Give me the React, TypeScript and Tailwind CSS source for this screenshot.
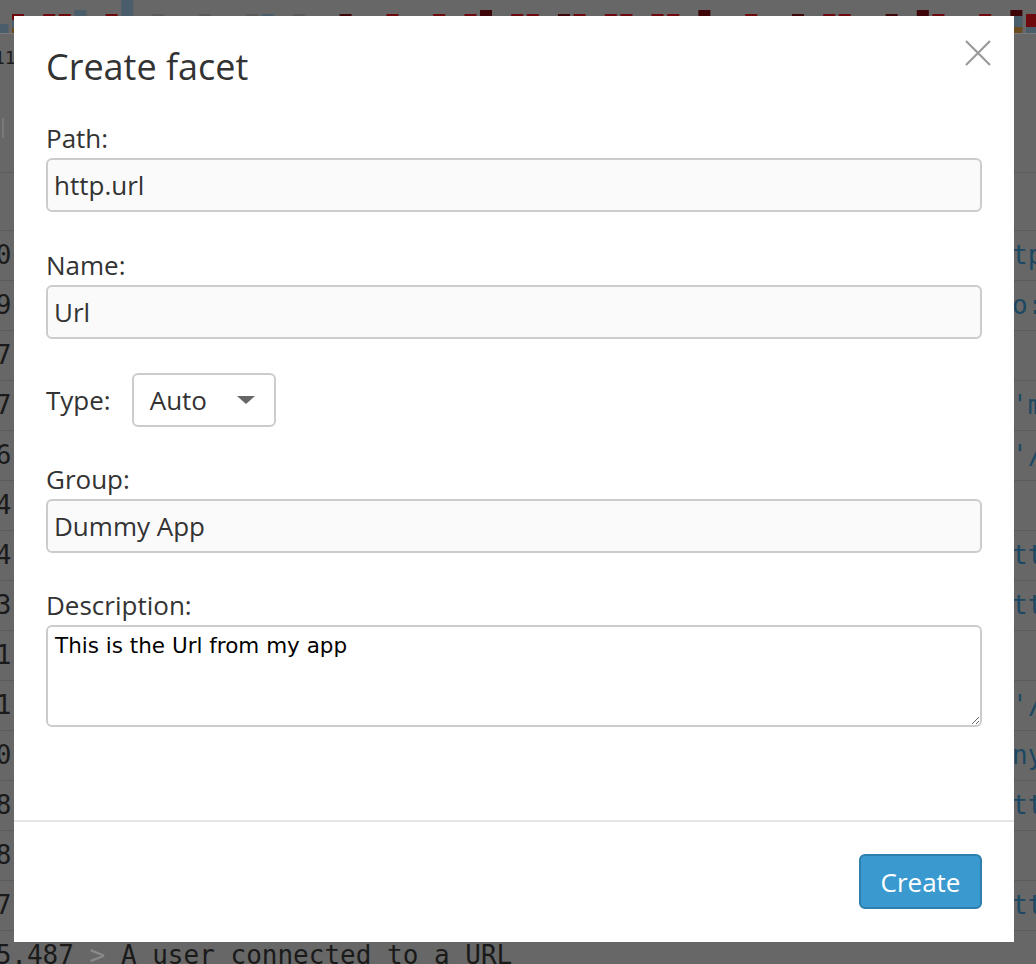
import React from 'react'

type Seg = [number, number, string]

const RED = '#6e0a0e'
const DARK = '#3e0609'
const BLUE = '#4a5d6b'
const GRAY = '#5a5a5a'
const ORANGE = '#6b4a1e'

// histogram bars behind the dim overlay: slot index -> stacked segments (top, bottom, colour)
const bars: Record<number, Seg[]> = {
  [-1]: [[24, 33, BLUE]],
  0: [[14, 20, RED], [20, 28, BLUE], [28, 33, ORANGE]],
  2: [[14, 33, RED]],
  3: [[14, 33, RED]],
  4: [[10, 33, BLUE]],
  6: [[14, 33, RED]],
  7: [[0, 33, BLUE]],
  9: [[14, 33, GRAY]],
  12: [[14, 33, GRAY]],
  15: [[14, 33, GRAY]],
  16: [[14, 33, BLUE]],
  18: [[14, 33, GRAY]],
  21: [[14, 33, DARK]],
  24: [[14, 33, RED]],
  27: [[14, 33, RED]],
  29: [[14, 33, RED]],
  30: [[10, 33, DARK]],
  32: [[14, 33, RED]],
  33: [[14, 33, RED]],
  35: [[14, 33, DARK]],
  36: [[14, 33, RED]],
  38: [[14, 33, RED]],
  39: [[14, 33, RED]],
  41: [[14, 33, RED]],
  42: [[14, 33, RED]],
  44: [[10, 33, DARK]],
  47: [[14, 33, RED]],
  50: [[14, 33, DARK]],
  52: [[14, 33, RED]],
  53: [[14, 33, RED]],
  56: [[14, 33, DARK]],
  58: [[10, 33, DARK]],
  59: [[14, 33, RED]],
  62: [[14, 33, RED]],
  64: [[10, 16, DARK], [16, 27, BLUE], [27, 33, ORANGE]],
  65: [[14, 27, RED], [27, 33, BLUE]],
}

const rows: { sec: string; url: string }[] = [
  { sec: '00', url: 'tp://' },
  { sec: '59', url: 'o://' },
  { sec: '57', url: '' },
  { sec: '57', url: "'my" },
  { sec: '56', url: "'/r" },
  { sec: '54', url: '' },
  { sec: '54', url: 'tt' },
  { sec: '53', url: 'tt' },
  { sec: '51', url: '' },
  { sec: '51', url: "'/r" },
  { sec: '50', url: 'ny' },
  { sec: '48', url: 'tt' },
  { sec: '48', url: '' },
  { sec: '47', url: 'tt' },
  { sec: '45', url: '' },
]

function Histogram() {
  return (
    <svg width="1036" height="40" className="block">
      {Object.entries(bars).map(([i, segs]) =>
        segs.map(([top, bottom, color], k) => (
          <rect key={i + '-' + k} x={12 + Number(i) * 15.6} y={top} width={12} height={bottom - top} fill={color} />
        ))
      )}
      <rect x={0} y={33} width={1036} height={1} fill="#7a7a7a" />
    </svg>
  )
}

function Field({ label, value }: { label: string; value: string }) {
  return (
    <div>
      <label className="block text-[26px] leading-[36px] text-[#333] mb-[2px]">{label}</label>
      <input
        readOnly
        defaultValue={value}
        className="block w-full h-[54px] rounded-[6px] border-2 border-[#cccccc] bg-[#fafafa] px-[6px] text-[26px] text-[#333] outline-none"
      />
    </div>
  )
}

export default function App() {
  return (
    <div className="relative h-[964px] w-full overflow-hidden bg-[#676767] font-['DejaVu_Sans_Mono',monospace]">
      {/* Page behind the dim overlay */}
      <Histogram />
      <div className="h-[30px] pt-[6px] -ml-[6px] text-[18px] leading-[24px] text-[#1c1c1c]">11:30</div>
      <div className="mt-[48px] ml-[2px] w-[2px] h-[20px] bg-[#7a7a7a]" />
      <div className="mt-[34px] border-t border-[#5c5c5c] h-[58px]" />
      {rows.map((r, i) => (
        <div
          key={i}
          className="flex h-[50px] border-t border-[#5c5c5c] -ml-[20px] whitespace-nowrap text-[26px] leading-[49px]"
        >
          <div className="w-[1032px] shrink-0 overflow-hidden text-[#1a1a1a]">
            {r.sec}.487 <span className="text-[#8a8a8a]">&gt;</span> A user connected to a URL
          </div>
          <div className="text-[#1c4862]">{r.url}</div>
        </div>
      ))}

      {/* Modal */}
      <div className="absolute left-[14px] top-[16px] w-[1000px] h-[926px] bg-white flex flex-col font-['Open_Sans',sans-serif] text-[#333]">
        <div className="px-[32px] pt-[31px]">
          <h1 className="text-[36px] leading-[40px] font-normal">Create facet</h1>
        </div>
        <button className="absolute right-[23px] top-[24px] w-[26px] h-[26px]">
          <svg width="26" height="26" viewBox="0 0 26 26">
            <path d="M1 1 L25 25 M25 1 L1 25" stroke="#9a9a9a" strokeWidth="2.2" fill="none" />
          </svg>
        </button>

        <div className="flex-1 px-[32px] pt-[33px]">
          <Field label="Path:" value="http.url" />
          <div className="mt-[35px]">
            <Field label="Name:" value="Url" />
          </div>
          <div className="mt-[34px] flex items-center h-[54px]">
            <span className="text-[26px] leading-[36px] mr-[21px]">Type:</span>
            <div className="flex items-center w-[144px] h-[54px] rounded-[6px] border-2 border-[#cccccc] bg-white">
              <span className="pl-[16px] text-[26px] leading-[36px]">Auto</span>
              <svg width="18" height="8" viewBox="0 0 18 8" className="ml-auto mr-[19px]">
                <path d="M0 0 L18 0 L9 8 Z" fill="#666" />
              </svg>
            </div>
          </div>
          <div className="mt-[34px]">
            <Field label="Group:" value="Dummy App" />
          </div>
          <div className="mt-[34px]">
            <label className="block text-[26px] leading-[36px] mb-[2px]">Description:</label>
            <textarea
              defaultValue="This is the Url from my app"
              className="block w-full h-[102px] rounded-[6px] border-2 border-[#cccccc] bg-white px-[7px] pt-[6px] font-['DejaVu_Sans',sans-serif] text-[21.5px] leading-[26px] text-black outline-none resize-y"
            />
          </div>
        </div>

        <div className="border-t-2 border-[#e5e5e5] px-[32px] pt-[32px] pb-[33px] flex">
          <button className="ml-auto w-[123px] h-[55px] rounded-[6px] bg-[#3a9ad0] border-2 border-[#2d7fae] text-white text-[26px] leading-[36px]">
            Create
          </button>
        </div>
      </div>
    </div>
  )
}
